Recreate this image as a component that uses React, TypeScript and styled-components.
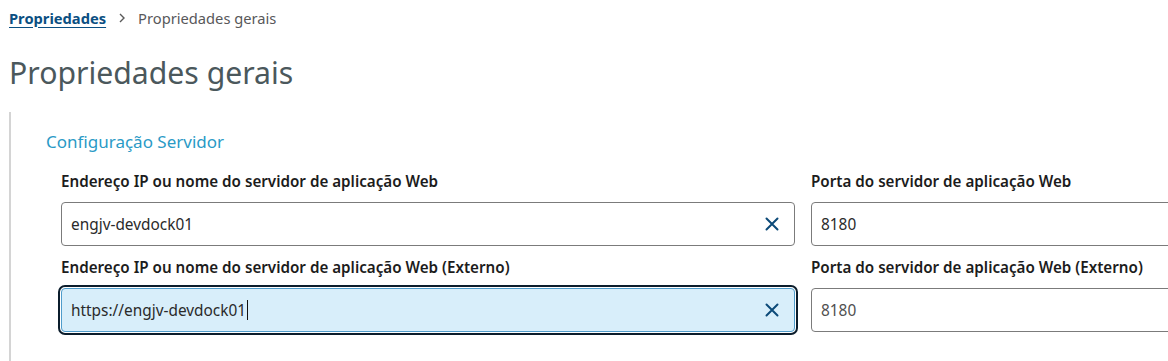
import React from "react";
import styled, { createGlobalStyle } from "styled-components";

const GlobalStyle = createGlobalStyle`
  html, body {
    margin: 0;
    padding: 0;
    background: #ffffff;
    font-family: "Noto Sans", "Lato", sans-serif;
    overflow: hidden;
  }
`;

const Page = styled.div`
  padding-left: 9px;
  overflow: hidden;
`;

const Breadcrumb = styled.nav`
  display: flex;
  align-items: center;
  gap: 12px;
  height: 20px;
  margin-top: 8px;
  font-size: 14.7px;
`;

const CrumbLink = styled.a`
  color: #0b4f82;
  font-weight: 700;
  text-decoration: underline;
  text-underline-offset: 3px;
`;

const CrumbCurrent = styled.span`
  color: #58585a;
`;

const Title = styled.h1`
  margin: 23px 0 0;
  height: 44px;
  line-height: 44px;
  font-size: 30.2px;
  font-weight: 400;
  color: #4b585c;
`;

const Section = styled.section`
  margin-top: 17px;
  border-left: 2px solid #d4d4d4;
  padding: 20px 0 40px 35px;
`;

const SectionTitle = styled.h2`
  margin: 0 0 19px;
  line-height: 20px;
  font-size: 17px;
  font-weight: 400;
  color: #2a9ac6;
`;

const Grid = styled.div`
  display: grid;
  grid-template-columns: 734px 420px;
  column-gap: 16px;
  row-gap: 11px;
  padding-left: 15px;
`;

const Field = styled.div`
  display: flex;
  flex-direction: column;
  gap: 11px;
`;

const Label = styled.label`
  line-height: 20px;
  font-size: 15.2px;
  font-weight: 600;
  color: #1c1c1c;
  white-space: nowrap;
`;

const InputShell = styled.div<{ $focused?: boolean }>`
  display: flex;
  align-items: center;
  box-sizing: border-box;
  height: 44px;
  padding: 0 14px 0 9px;
  border: 1px solid ${(p) => (p.$focused ? "#4f9ccb" : "#7b7b7b")};
  border-radius: 4px;
  background: ${(p) => (p.$focused ? "#d8eefa" : "#ffffff")};
  outline: ${(p) => (p.$focused ? "2px solid #0b1d2c" : "none")};
  outline-offset: 1px;
`;

const Value = styled.span<{ $muted?: boolean }>`
  font-size: 15.4px;
  color: ${(p) => (p.$muted ? "#505050" : "#2a2a2a")};
  white-space: nowrap;
`;

const Caret = styled.span`
  display: inline-block;
  width: 1px;
  height: 20px;
  margin-left: 1px;
  background: #111;
`;

const Spacer = styled.div`
  flex: 1;
`;

const ClearButton = styled.button`
  display: flex;
  align-items: center;
  justify-content: center;
  width: 16px;
  height: 16px;
  padding: 0;
  border: none;
  background: transparent;
  color: #0c4a78;
`;

function ClearIcon() {
  return (
    <svg width="14" height="14" viewBox="0 0 14 14" fill="none">
      <path d="M1.5 1.5 L12.5 12.5 M12.5 1.5 L1.5 12.5" stroke="currentColor" strokeWidth="2" strokeLinecap="round" />
    </svg>
  );
}

export default function App() {
  return (
    <>
      <GlobalStyle />
      <Page>
        <Breadcrumb>
          <CrumbLink href="#">Propriedades</CrumbLink>
          <svg width="8" height="10" viewBox="0 0 8 10" fill="none">
            <path d="M2 1 L6 5 L2 9" stroke="#5a5a5a" strokeWidth="1.4" />
          </svg>
          <CrumbCurrent>Propriedades gerais</CrumbCurrent>
        </Breadcrumb>
        <Title>Propriedades gerais</Title>
        <Section>
          <SectionTitle>Configuração Servidor</SectionTitle>
          <Grid>
            <Field>
              <Label>Endereço IP ou nome do servidor de aplicação Web</Label>
              <InputShell>
                <Value>engjv-devdock01</Value>
                <Spacer />
                <ClearButton aria-label="Limpar"><ClearIcon /></ClearButton>
              </InputShell>
            </Field>
            <Field>
              <Label>Porta do servidor de aplicação Web</Label>
              <InputShell>
                <Value>8180</Value>
              </InputShell>
            </Field>
            <Field>
              <Label>Endereço IP ou nome do servidor de aplicação Web (Externo)</Label>
              <InputShell $focused>
                <Value>https://engjv-devdock01</Value>
                <Caret />
                <Spacer />
                <ClearButton aria-label="Limpar"><ClearIcon /></ClearButton>
              </InputShell>
            </Field>
            <Field>
              <Label>Porta do servidor de aplicação Web (Externo)</Label>
              <InputShell>
                <Value $muted>8180</Value>
              </InputShell>
            </Field>
          </Grid>
        </Section>
      </Page>
    </>
  );
}
